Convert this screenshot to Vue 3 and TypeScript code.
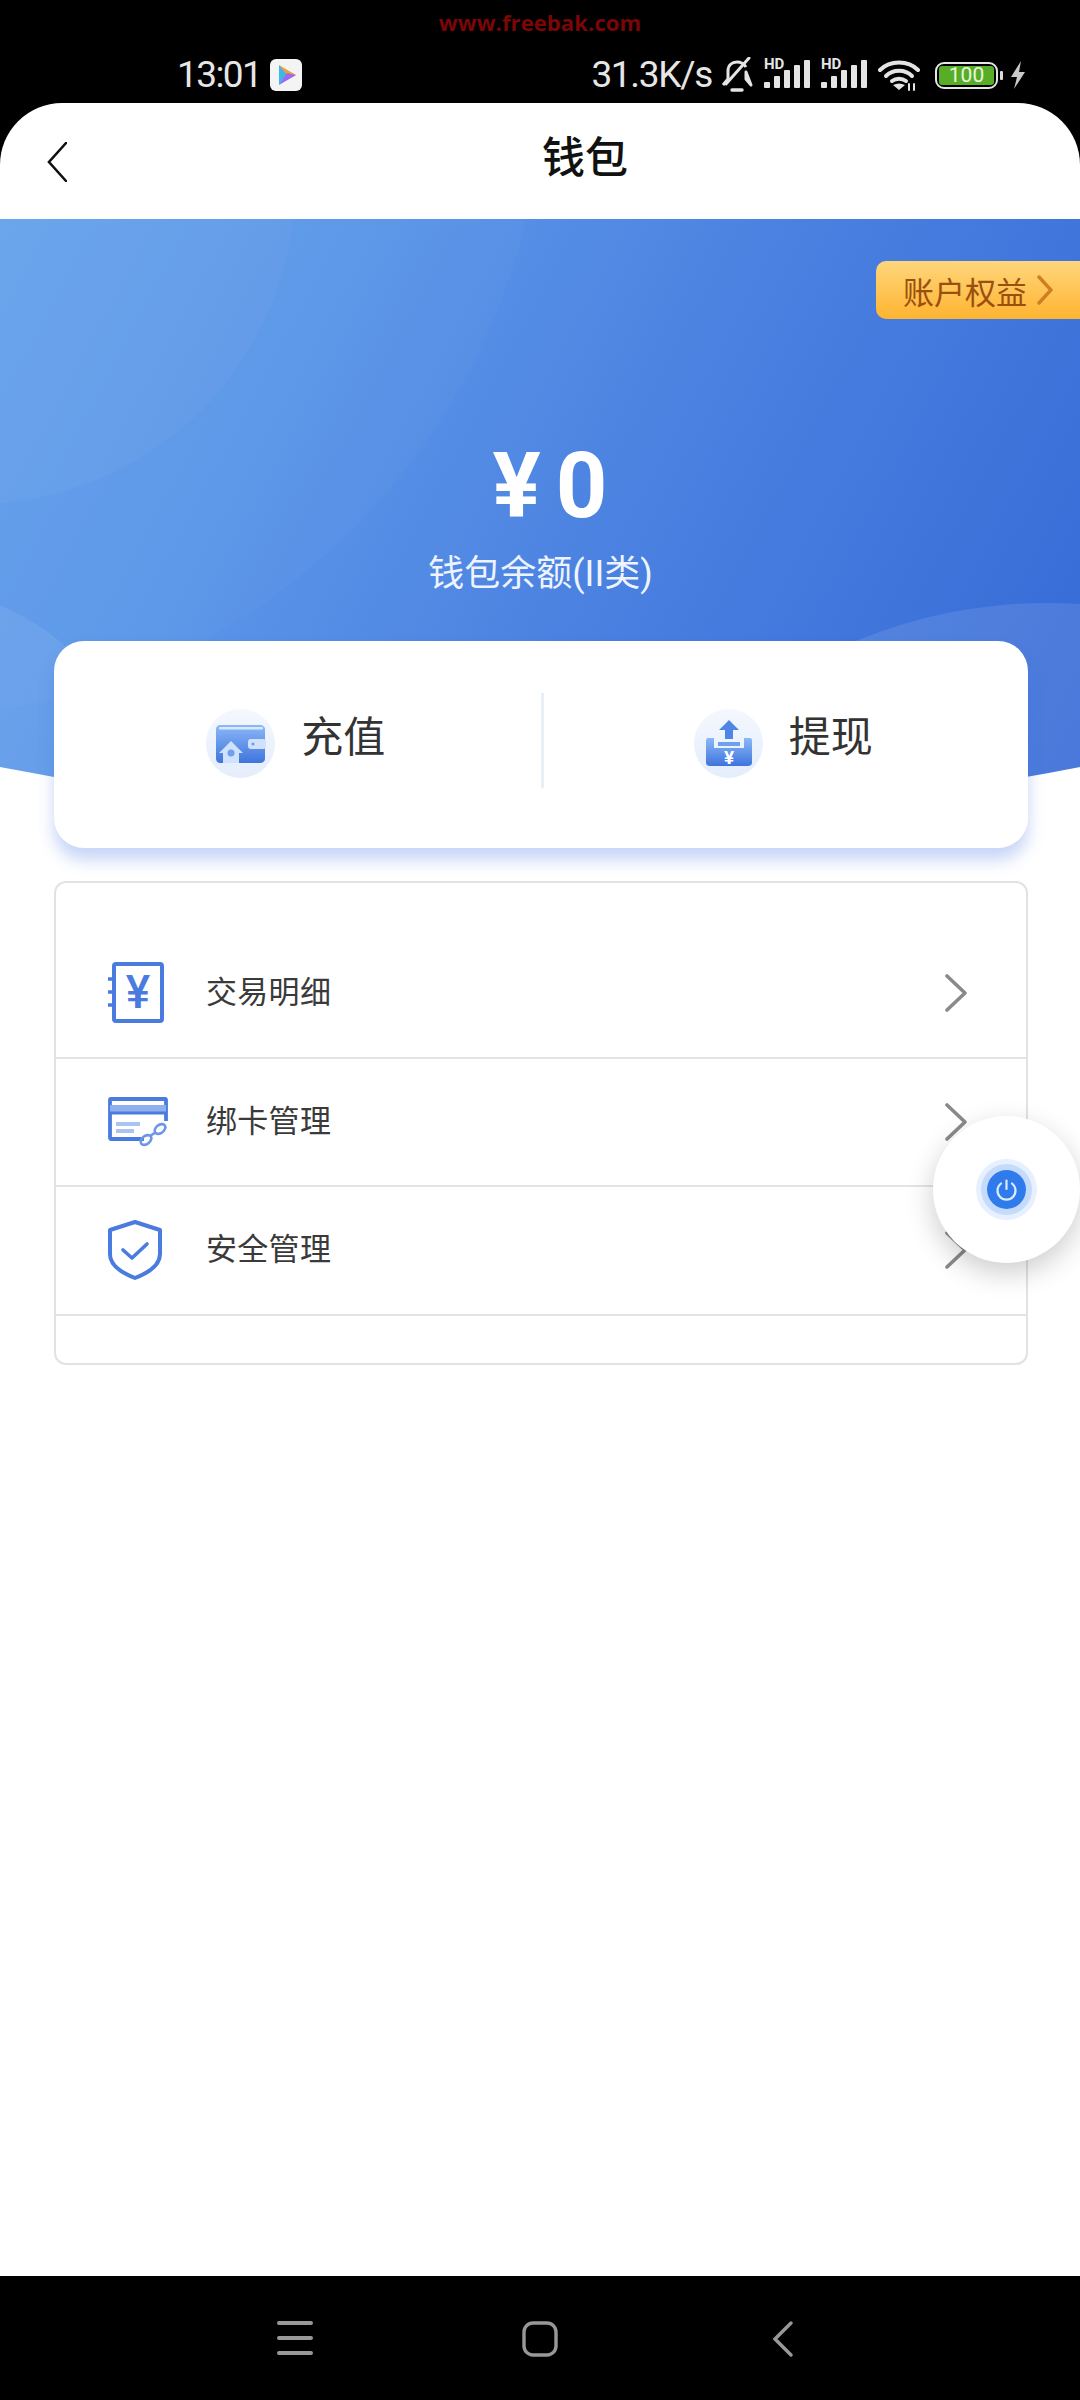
<template>
  <div class="screen">
    <div class="status-bar">
      <div class="watermark">www.freebak.com</div>
      <div class="status-row">
        <span class="time">13:01</span>
        <svg class="play-icon" viewBox="0 0 32 32" width="32" height="32">
          <rect width="32" height="32" rx="6" fill="#f4f4f4" />
          <path d="M9 6 L26 16 L17 21 Z" fill="#f2a03d" />
          <path d="M9 6 L17 16 L9 26 Z" fill="#3fb6ea" />
          <path d="M26 16 L9 26 L17 14 Z" fill="#9a6af0" />
        </svg>
        <div class="status-right">
          <span class="speed">31.3K/s</span>
          <svg class="bell" viewBox="0 0 32 36" width="32" height="36" fill="none" stroke="#e4e4e4" stroke-width="3">
            <path d="M2 28 L7 22 V14 C7 8 11 5 16 5 C20 5 23 7 25 10 M25 15 V22 L30 28 Z" stroke-linejoin="round" />
            <path d="M5 27 L28 1" stroke-linecap="round" />
            <path d="M11 33 H21" stroke-width="3.4" stroke-linecap="round" />
          </svg>
          <div v-for="n in 2" :key="n" class="signal">
            <span class="hd">HD</span>
            <svg viewBox="0 0 46 28" width="46" height="28" fill="#e4e4e4">
              <rect x="0" y="22" width="6" height="6" rx="1" />
              <rect x="10" y="16" width="6" height="12" rx="1" />
              <rect x="20" y="10" width="6" height="18" rx="1" />
              <rect x="30" y="5" width="6" height="23" rx="1" />
              <rect x="40" y="0" width="6" height="28" rx="1" />
            </svg>
          </div>
          <svg class="wifi" viewBox="0 0 42 31" width="42" height="31" fill="none" stroke="#e4e4e4" stroke-width="4" stroke-linecap="round">
            <path d="M2 10 C12 0 30 0 40 10" />
            <path d="M8 16 C15 9 27 9 34 16" />
            <path d="M14 21 C18 18 24 18 28 21" />
            <path d="M21 30 L15 25 C19 23 23 23 27 25 Z" fill="#e4e4e4" stroke="none" />
            <path d="M31 24 V30 M36 24 V30" stroke-width="2" />
          </svg>
          <div class="battery">
            <div class="battery-body"><span>100</span></div>
            <i class="battery-nub"></i>
          </div>
          <svg class="bolt" viewBox="0 0 16 28" width="16" height="28" fill="#c9c9c9">
            <path d="M11 0 L1 16 H7 L4 28 L15 11 H9 Z" />
          </svg>
        </div>
      </div>
    </div>

    <main class="page">
      <header class="top-bar">
        <svg class="back" viewBox="0 0 20 40" width="20" height="40" fill="none" stroke="#111" stroke-width="2.6" stroke-linecap="round">
          <path d="M19 1 L2 20 L19 39" />
        </svg>
        <h1>钱包</h1>
      </header>

      <section class="banner">
        <i class="deco deco-a"></i>
        <i class="deco deco-b"></i>
        <i class="deco deco-c"></i>
        <i class="deco deco-d"></i>
        <div class="rights">
          <span>账户权益</span>
          <svg viewBox="0 0 16 30" width="16" height="30" fill="none" stroke="#cf7f22" stroke-width="3.4" stroke-linecap="round">
            <path d="M2 2 L14 15 L2 28" />
          </svg>
        </div>
        <div class="amount"><span class="yen">¥</span><span>0</span></div>
        <div class="amount-label">钱包余额(II类)</div>
      </section>

      <section class="actions">
        <div class="action action-left">
          <span class="action-icon">
            <svg viewBox="0 0 69 69" width="69" height="69">
              <defs>
                <linearGradient id="walletFill" x1="0" y1="0" x2="0" y2="1">
                  <stop offset="0" stop-color="#8ab8f7" />
                  <stop offset="1" stop-color="#3f74dd" />
                </linearGradient>
              </defs>
              <path d="M10 20 C10 18 12 16 14 16 H54 C57 16 59 18 59 20 V50 C59 52 57 54 54 54 H14 C12 54 10 52 10 50 Z" fill="url(#walletFill)" />
              <rect x="13" y="18" width="44" height="2.5" rx="1" fill="#d9e8fd" />
              <rect x="42" y="30" width="18" height="10" rx="3" fill="#cfe1fb" />
              <circle cx="47" cy="35" r="1.6" fill="#6f9ff0" />
              <path d="M13 44 L25 32 L37 44 H33 V54 H17 V44 Z" fill="#cfe2fc" />
              <circle cx="25" cy="44" r="3.5" fill="#6f9ff0" />
            </svg>
          </span>
          <span class="action-text">充值</span>
        </div>
        <i class="action-divider"></i>
        <div class="action action-right">
          <span class="action-icon">
            <svg viewBox="0 0 69 69" width="69" height="69">
              <defs>
                <linearGradient id="trayFill" x1="0" y1="0" x2="0" y2="1">
                  <stop offset="0" stop-color="#8ab8f7" />
                  <stop offset="1" stop-color="#3f74dd" />
                </linearGradient>
              </defs>
              <path d="M35 11 L45 21 H39 V30 H31 V21 H25 Z" fill="#4f86e6" />
              <rect x="24" y="33" width="22" height="4" fill="#6fa0ef" />
              <path d="M12 31 C12 30 13 29 14 29 H20 V39 H50 V29 H56 C57 29 58 30 58 31 V54 C58 56 56 57 54 57 H16 C14 57 12 56 12 54 Z" fill="url(#trayFill)" />
              <text x="35" y="55" text-anchor="middle" font-size="19" font-weight="700" fill="#fff" font-family="Roboto, sans-serif">¥</text>
            </svg>
          </span>
          <span class="action-text">提现</span>
        </div>
      </section>

      <section class="menu">
        <div v-for="item in menuItems" :key="item.key" class="menu-row">
          <span class="menu-icon">
            <svg v-if="item.key === 'detail'" viewBox="0 0 60 62" width="60" height="62" fill="none" stroke="#4a7bde" stroke-width="4">
              <rect x="6" y="2" width="48" height="57" rx="2" />
              <path d="M0 17 H6 M0 30 H6 M0 43 H6" stroke-width="3.4" />
              <text x="30" y="46" text-anchor="middle" font-size="46" font-weight="500" fill="#4a7bde" stroke="none" font-family="Roboto, sans-serif">¥</text>
            </svg>
            <svg v-else-if="item.key === 'card'" viewBox="0 0 60 50" width="60" height="50" fill="none" stroke="#4a7bde" stroke-width="3.8">
              <path d="M36 42 H3 C2 42 2 41 2 40 V3 C2 2 2 2 3 2 H57 C58 2 58 2 58 3 V24" />
              <rect x="2" y="8" width="56" height="7" fill="#8eb0ee" stroke="none" />
              <path d="M2 16 H58" stroke-width="3" />
              <rect x="8" y="25" width="24" height="4" fill="#a9c4f2" stroke="none" />
              <rect x="8" y="32" width="18" height="4" fill="#a9c4f2" stroke="none" />
              <g stroke-width="2.6" stroke="#6c97e8">
                <ellipse cx="38" cy="43" rx="6" ry="4" transform="rotate(-38 38 43)" />
                <ellipse cx="52" cy="32" rx="6" ry="4" transform="rotate(-38 52 32)" />
                <path d="M42 39 L48 35" />
              </g>
            </svg>
            <svg v-else viewBox="0 0 54 60" width="54" height="60" fill="none" stroke="#4a7bde" stroke-width="4" stroke-linejoin="round" stroke-linecap="round">
              <path d="M27 2 L52 10 V34 C52 45 40 53 27 58 C14 53 2 45 2 34 V10 Z" />
              <path d="M15 30 L24 38 L39 24" stroke-width="3.6" />
            </svg>
          </span>
          <span class="menu-text">{{ item.label }}</span>
          <svg class="menu-arrow" viewBox="0 0 22 38" width="22" height="38" fill="none" stroke="#8a8a8a" stroke-width="3.6" stroke-linecap="round" stroke-linejoin="round">
            <path d="M2 2 L20 19 L2 36" />
          </svg>
        </div>
      </section>

      <div class="fab">
        <span class="fab-ring">
          <svg viewBox="0 0 39 39" width="39" height="39" fill="none" stroke="#dcebff" stroke-width="2.2" stroke-linecap="round">
            <circle cx="19.5" cy="19.5" r="19.5" fill="#2f7bec" stroke="none" />
            <path d="M14 13.5 A9 9 0 1 0 25 13.5" />
            <path d="M19.5 10.5 V19" />
          </svg>
        </span>
      </div>
    </main>

    <nav class="nav-bar">
      <svg viewBox="0 0 36 34" width="36" height="34" fill="none" stroke="#989898" stroke-width="4" stroke-linecap="round">
        <path d="M2 2 H34 M2 17 H34 M2 32 H34" />
      </svg>
      <svg viewBox="0 0 36 36" width="36" height="36" fill="none" stroke="#989898" stroke-width="3.4">
        <rect x="2" y="2" width="32" height="32" rx="9" />
      </svg>
      <svg class="nav-back" viewBox="0 0 20 36" width="20" height="36" fill="none" stroke="#989898" stroke-width="3.4" stroke-linecap="round">
        <path d="M18 2 L2 18 L18 34" />
      </svg>
    </nav>
  </div>
</template>

<script setup lang="ts">
interface MenuItem {
  key: string;
  label: string;
}

const menuItems: MenuItem[] = [
  { key: 'detail', label: '交易明细' },
  { key: 'card', label: '绑卡管理' },
  { key: 'safe', label: '安全管理' },
];
</script>

<style>
html,
body {
  margin: 0;
  background: #000;
}
</style>

<style scoped>
.screen {
  width: 1080px;
  height: 2400px;
  display: flex;
  flex-direction: column;
  background: #000;
  font-family: Roboto, "Noto Sans CJK SC", sans-serif;
  overflow: hidden;
}

/* status bar */
.status-bar {
  height: 103px;
  flex-shrink: 0;
  padding-top: 13px;
  box-sizing: border-box;
}

.watermark {
  height: 19px;
  line-height: 19px;
  text-align: center;
  font-size: 22px;
  font-weight: 700;
  letter-spacing: 0.1px;
  color: #7a0606;
  font-family: "Open Sans", sans-serif;
}

.status-row {
  display: flex;
  align-items: center;
  height: 36px;
  margin-top: 25px;
  padding: 0 54px 0 177px;
  color: #e6e6e6;
}

.time {
  font-size: 37px;
  line-height: 36px;
  letter-spacing: -1.6px;
}

.play-icon {
  margin-left: 9px;
}

.status-right {
  margin-left: auto;
  display: flex;
  align-items: center;
}

.speed {
  font-size: 37px;
  line-height: 36px;
  letter-spacing: -1.3px;
  margin-right: 9px;
}

.bell {
  margin-right: 11px;
}

.signal {
  position: relative;
  width: 46px;
  height: 36px;
  margin-right: 11px;
}

.signal svg {
  position: absolute;
  left: 0;
  bottom: 5px;
}

.hd {
  position: absolute;
  left: 0;
  top: 0;
  font-size: 15px;
  line-height: 14px;
  font-weight: 700;
  color: #e6e6e6;
}

.wifi {
  margin-right: 15px;
}

.battery {
  display: flex;
  align-items: center;
  margin-right: 7px;
}

.battery-body {
  width: 63px;
  height: 27px;
  box-sizing: border-box;
  border: 2.5px solid #e6e6e6;
  border-radius: 9px;
  padding: 2px;
}

.battery-body span {
  display: block;
  height: 100%;
  background: #58ad27;
  border-radius: 3px;
  text-align: center;
  font-size: 21px;
  line-height: 18px;
  color: #e8f7dc;
}

.battery-nub {
  width: 3px;
  height: 9px;
  margin-left: 2px;
  background: #dcdcdc;
  border-radius: 1px;
}

/* page */
.page {
  position: relative;
  flex: 1;
  display: flex;
  flex-direction: column;
  background: #fff;
  border-radius: 62px 62px 0 0;
  overflow: hidden;
}

.top-bar {
  position: relative;
  height: 116px;
  flex-shrink: 0;
  display: flex;
  align-items: center;
  justify-content: center;
}

.top-bar h1 {
  margin: 0 0 14px;
  padding-left: 90px;
  font-size: 43px;
  font-weight: 500;
  color: #111;
}

.back {
  position: absolute;
  left: 47px;
  top: 39px;
}

/* banner */
.banner {
  position: relative;
  height: 620px;
  flex-shrink: 0;
  display: flex;
  flex-direction: column;
  align-items: center;
  overflow: hidden;
  background: linear-gradient(118deg, #64a2ec 0%, #5a95e8 28%, #4a80e0 58%, #3468d6 100%);
  clip-path: path('M0 0 H1080 V548 Q540 654 0 548 Z');
}

.deco {
  position: absolute;
  border-radius: 50%;
  background: rgba(255, 255, 255, 0.035);
}

.deco-a {
  width: 640px;
  height: 640px;
  left: -345px;
  top: -355px;
}

.deco-b {
  width: 1300px;
  height: 1300px;
  left: -756px;
  top: -800px;
  background: rgba(255, 255, 255, 0.018);
}

.deco-c {
  width: 300px;
  height: 190px;
  left: -180px;
  top: 382px;
  background: rgba(255, 255, 255, 0.07);
  transform: rotate(25deg);
}

.deco-d {
  width: 1000px;
  height: 1000px;
  left: 547px;
  top: 384px;
  background: rgba(255, 255, 255, 0.1);
}

.rights {
  position: relative;
  align-self: flex-end;
  margin-top: 42px;
  width: 204px;
  height: 58px;
  box-sizing: border-box;
  padding-left: 27px;
  display: flex;
  align-items: center;
  border-radius: 10px 0 0 10px;
  background: linear-gradient(180deg, #fed67c 0%, #ffb431 100%);
  color: #9b4f0e;
  font-size: 31px;
}

.rights svg {
  margin-left: 10px;
}

.amount {
  position: relative;
  margin-top: 128px;
  display: flex;
  align-items: center;
  height: 80px;
  font-size: 90px;
  line-height: 80px;
  font-weight: 700;
  color: #fff;
}

.yen {
  margin-right: 15px;
  margin-left: 20px;
}

.amount-label {
  position: relative;
  margin-top: 25px;
  margin-left: 1px;
  font-size: 36px;
  line-height: 44px;
  color: #eef4ff;
}

/* actions card */
.actions {
  position: relative;
  z-index: 1;
  flex-shrink: 0;
  margin: -198px 52px 0 54px;
  height: 207px;
  display: flex;
  background: #fff;
  border-radius: 30px;
  box-shadow: 0 12px 16px rgba(70, 115, 225, 0.3);
}

.action {
  flex: 1;
  display: flex;
  align-items: flex-start;
  justify-content: center;
  padding-top: 68px;
  box-sizing: border-box;
}

.action-left {
  padding-right: 1px;
}

.action-right {
  padding-right: 3px;
}

.action-icon {
  width: 69px;
  height: 69px;
  border-radius: 50%;
  background: linear-gradient(180deg, #f4f8fe 0%, #e4edfb 100%);
}

.action-icon svg {
  display: block;
}

.action-text {
  margin: 4px 0 0 26px;
  font-size: 42px;
  line-height: 50px;
  color: #333;
}

.action-divider {
  width: 3px;
  height: 95px;
  margin: 52px -2px 0 2px;
  background: #e9eff9;
}

/* menu */
.menu {
  flex-shrink: 0;
  margin: 33px 52px 0 54px;
  padding: 47px 0 47px;
  border: 2px solid #e2e2e2;
  border-radius: 12px;
}

.menu-row {
  display: flex;
  align-items: center;
  height: 128.5px;
  box-sizing: border-box;
  border-bottom: 2px solid #e4e4e4;
}

.menu-icon {
  width: 60px;
  height: 62px;
  margin-left: 52px;
  display: flex;
  align-items: center;
}

.menu-text {
  margin: 0 0 7px 38px;
  font-size: 31px;
  letter-spacing: 0.3px;
  color: #3a3a3a;
}

.menu-arrow {
  margin-left: auto;
  margin-right: 59px;
}

/* floating button */
.fab {
  position: absolute;
  left: 933px;
  top: 1013px;
  width: 147px;
  height: 147px;
  display: flex;
  align-items: center;
  justify-content: center;
  background: #fff;
  border-radius: 50%;
  box-shadow: 0 10px 28px rgba(0, 0, 0, 0.2);
}

.fab-ring {
  width: 39px;
  height: 39px;
  border-radius: 50%;
  box-shadow: 0 0 0 6px #c5dbfb, 0 0 0 11px #e7f0fe;
}

.fab-ring svg {
  display: block;
}

/* bottom nav */
.nav-bar {
  height: 124px;
  flex-shrink: 0;
  display: flex;
  align-items: flex-start;
  padding: 45px 0 0 277px;
  box-sizing: border-box;
  background: #000;
  gap: 209px;
}

.nav-back {
  margin-left: 6px;
}
</style>
